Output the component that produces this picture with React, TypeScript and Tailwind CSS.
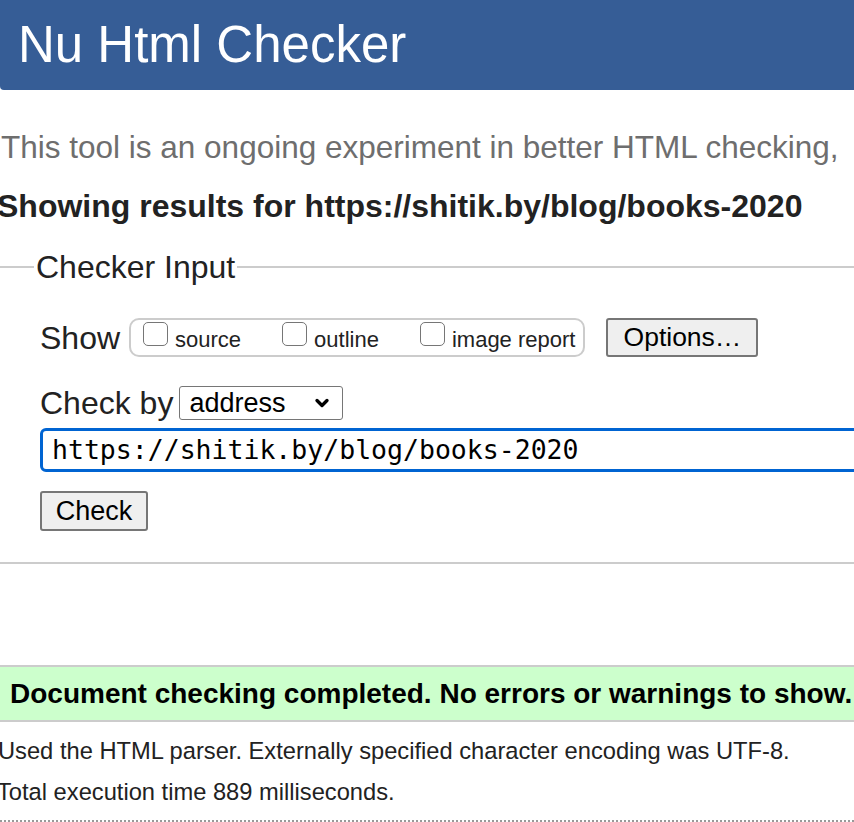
import { ChevronDown } from 'lucide-react';

const sans = { fontFamily: '"Liberation Sans", Arial, sans-serif' };

function Box({ label }: { label: string }) {
  return (
    <label className="flex items-start gap-[7px]">
      <span className="mt-[1px] block h-[24px] w-[25px] rounded-[5px] border-[1.5px] border-[#767676] bg-white" />
      <span className="mt-[7px] text-[22px] leading-[24px] text-[#222]">{label}</span>
    </label>
  );
}

export default function App() {
  return (
    <div className="h-[822px] w-[854px] overflow-hidden bg-white text-[#222]" style={sans}>
      {/* Header */}
      <div className="flex h-[90px] items-center rounded-bl-[4px] bg-[#365d96] pl-[18px]">
        <h1 className="mt-[-2px] text-[51px] leading-none text-white">Nu Html Checker</h1>
      </div>

      <p className="ml-[1px] mt-[39px] whitespace-nowrap text-[31.5px] leading-[36px] text-[#6e6e6e]">
        This tool is an ongoing experiment in better HTML checking,
      </p>
      <h2 className="ml-[-3px] mt-[23px] whitespace-nowrap text-[32px] font-bold leading-[36px] text-[#222]">
        Showing results for https://shitik.by/blog/books-2020
      </h2>

      {/* Checker input fieldset */}
      <div className="mt-[25px]">
        <div className="flex items-center">
          <div className="h-[2px] w-[34px] bg-[#ccc]" />
          <span className="px-[2px] text-[32px] leading-[36px] text-[#222]">Checker Input</span>
          <div className="h-[2px] flex-1 bg-[#ccc]" />
        </div>

        <div className="ml-[40px] mt-[33px] flex h-[39px] items-center">
          <span className="text-[32px] leading-[36px]">Show</span>
          <div className="ml-[9px] flex h-[39px] items-start rounded-[10px] border-2 border-[#ccc] pl-[12px] pr-[8px] pt-[1px]">
            <Box label="source" />
            <div className="w-[41px]" />
            <Box label="outline" />
            <div className="w-[41px]" />
            <Box label="image report" />
          </div>
          <button className="ml-[21px] h-[39px] w-[152px] rounded-[3px] border-2 border-[#767676] bg-[#efefef] text-[26.5px] leading-none text-black">
            Options…
          </button>
        </div>

        <div className="ml-[40px] mt-[29px] flex h-[34px] items-center">
          <span className="text-[32px] leading-[36px]">Check by</span>
          <div className="ml-[6px] flex h-[34px] w-[164px] items-center justify-between rounded-[3px] border-[1.5px] border-[#767676] bg-white pl-[9px] pr-[10px]">
            <span className="text-[27px] leading-none text-black">address</span>
            <ChevronDown className="h-[20px] w-[20px] text-black" strokeWidth={4} />
          </div>
        </div>

        <div
          className="ml-[40px] mt-[8px] flex h-[44px] w-[830px] items-center rounded-[6px] border-[3px] border-[#0064d2] pl-[9px] text-[26.5px] text-black"
          style={{ fontFamily: '"DejaVu Sans Mono", monospace' }}
        >
          https://shitik.by/blog/books-2020
        </div>

        <button className="ml-[40px] mt-[19px] h-[40px] w-[108px] rounded-[3px] border-2 border-[#767676] bg-[#efefef] text-[27px] leading-none text-black">
          Check
        </button>

        <div className="mt-[31px] h-[2px] w-full bg-[#ccc]" />
      </div>

      {/* Results */}
      <div className="mt-[101px] flex h-[57px] items-center border-y-2 border-[#ccc] bg-[#ccffcc] pl-[10px]">
        <span className="whitespace-nowrap text-[28px] font-bold leading-none text-black">
          Document checking completed. No errors or warnings to show.
        </span>
      </div>

      <p className="ml-[-2px] mt-[16px] whitespace-nowrap text-[23.7px] leading-[26px] text-[#222]">
        Used the HTML parser. Externally specified character encoding was UTF-8.
      </p>
      <p className="ml-[-3px] mt-[15px] whitespace-nowrap text-[23.7px] leading-[26px] text-[#222]">
        Total execution time 889 milliseconds.
      </p>
      <div className="mt-[15px] border-t-2 border-dotted border-[#999]" />
    </div>
  );
}
